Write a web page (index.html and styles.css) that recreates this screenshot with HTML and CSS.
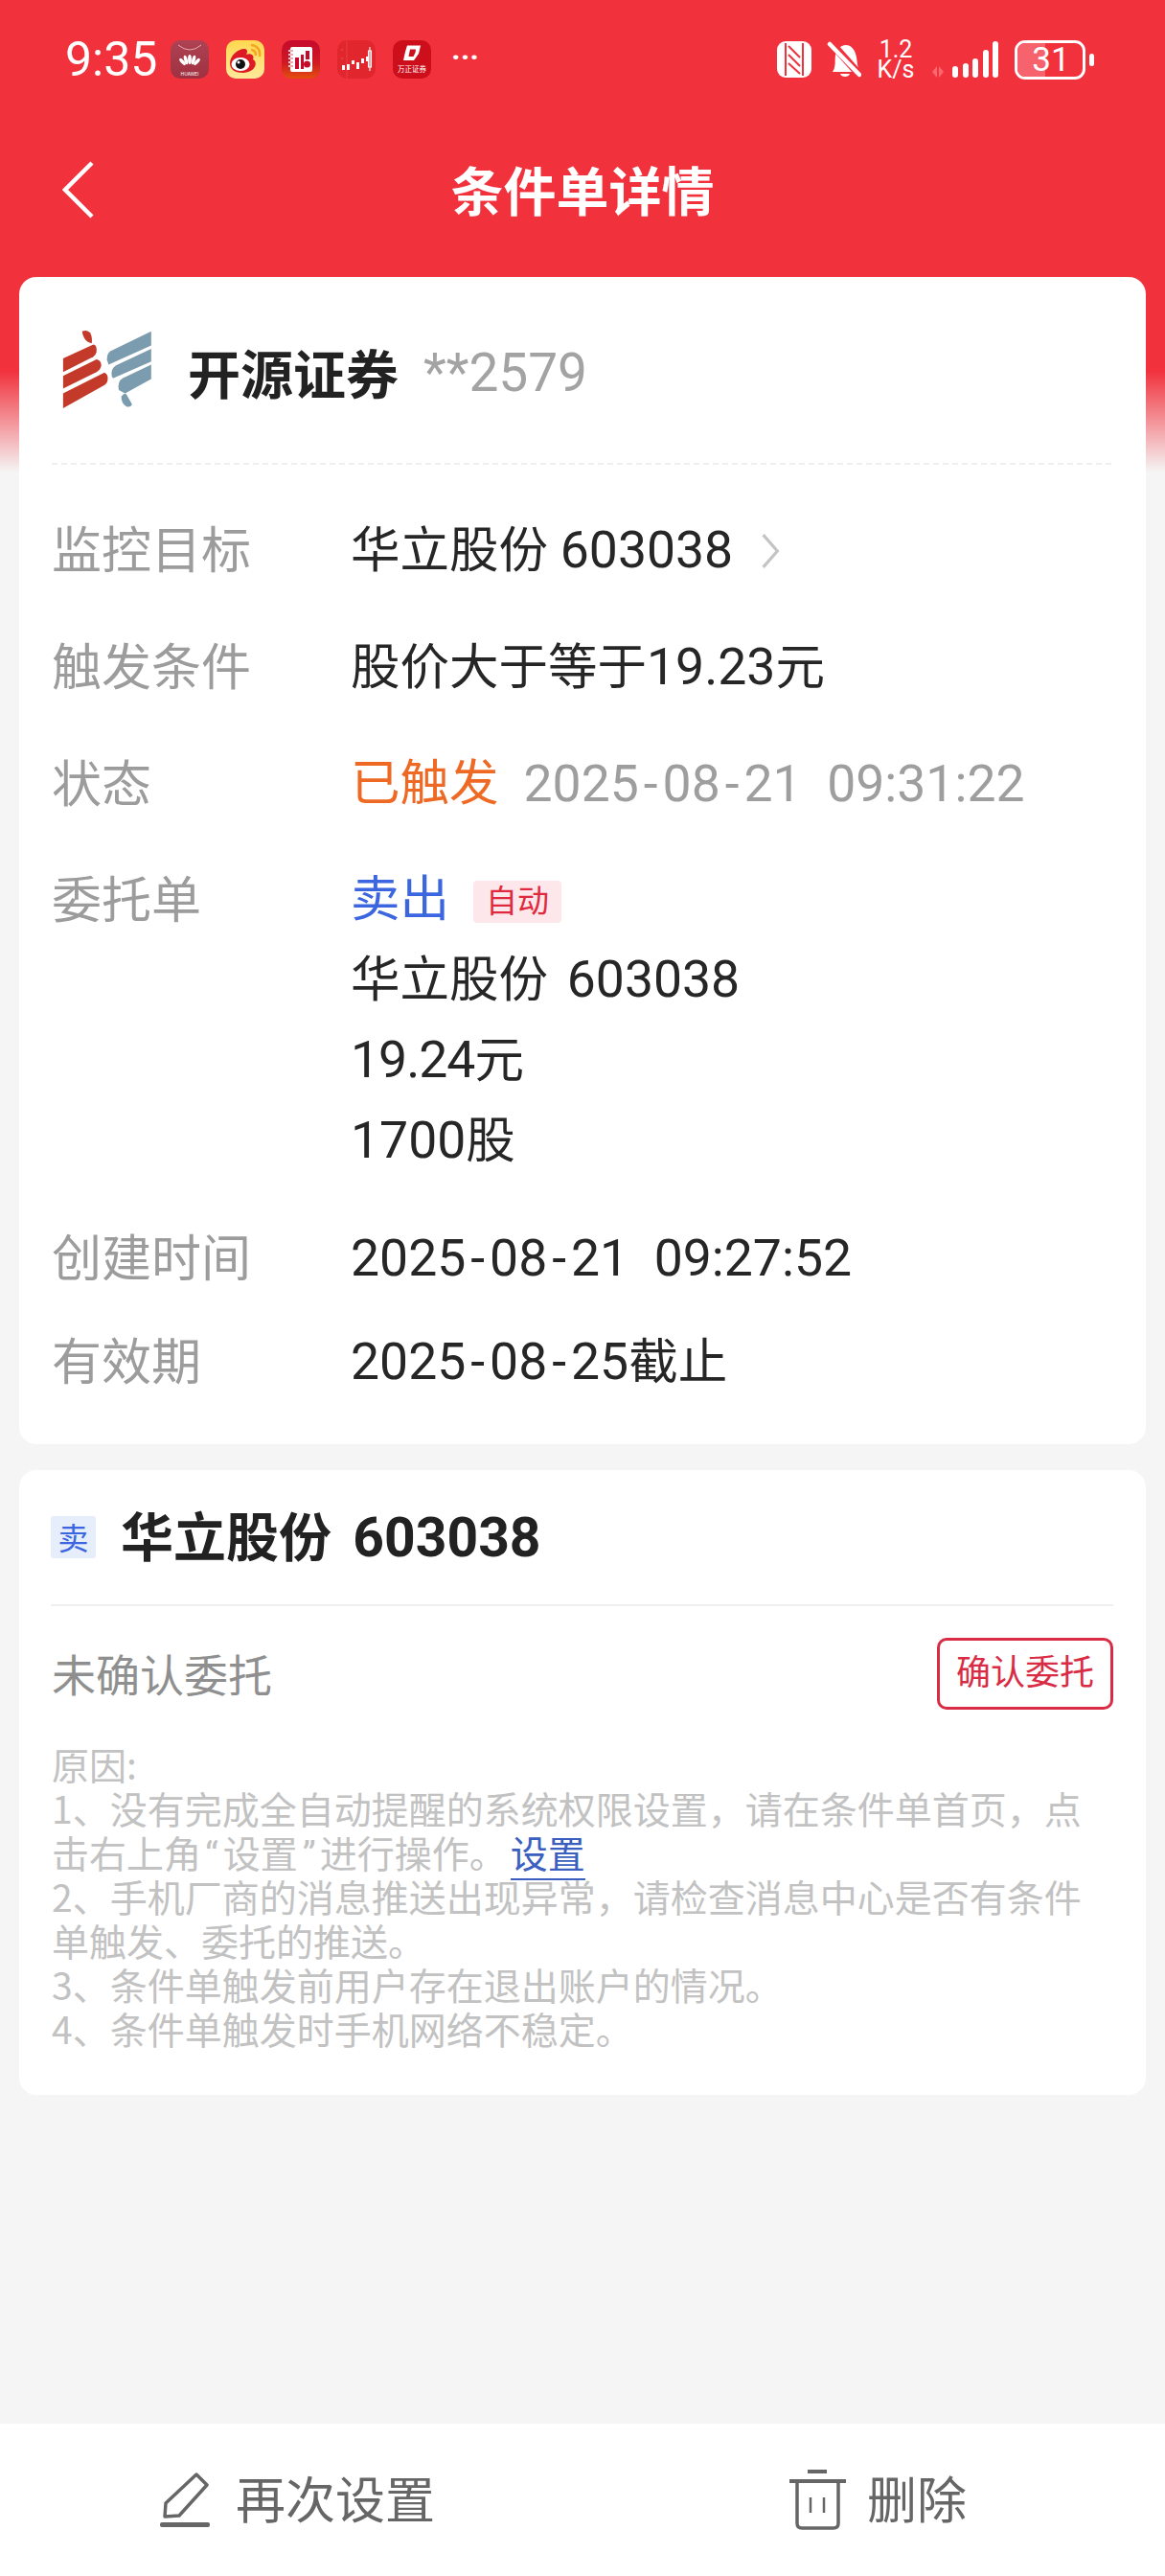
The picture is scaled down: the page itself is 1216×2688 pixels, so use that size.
FILE: index.html
```html
<!DOCTYPE html>
<html lang="zh-CN">
<head>
<meta charset="utf-8">
<title>条件单详情</title>
<link rel="stylesheet" href="styles.css">
</head>
<body>
<div class="screen">
  <header class="status">
    <span class="time">9:35</span>
    <div class="apps">
      <svg class="app" viewBox="0 0 40 40"><defs><linearGradient id="hw" x1="0" y1="0" x2="0" y2="1"><stop offset="0" stop-color="#ad4354"/><stop offset="1" stop-color="#a0303f"/></linearGradient></defs><rect width="40" height="40" rx="10" fill="url(#hw)"/><path d="M8 5Q20 15 32 5" fill="none" stroke="#e8b4bb" stroke-width=".9"/><g fill="#fff"><ellipse cx="20" cy="20" rx="1.900" ry="5"/><ellipse cx="16" cy="20.500" rx="1.800" ry="5" transform="rotate(-16 16 20.500)"/><ellipse cx="24" cy="20.500" rx="1.800" ry="5" transform="rotate(16 24 20.500)"/><ellipse cx="12.500" cy="22.500" rx="1.700" ry="4.500" transform="rotate(-42 12.500 22.500)"/><ellipse cx="27.500" cy="22.500" rx="1.700" ry="4.500" transform="rotate(42 27.500 22.500)"/></g><text x="20" y="36.500" class="app-txt" font-size="5">HUAWEI</text></svg>
      <svg class="app" viewBox="0 0 40 40"><defs><linearGradient id="wb" x1="0" y1="0" x2="0" y2="1"><stop offset="0" stop-color="#ffd84f"/><stop offset="1" stop-color="#ffe99a"/></linearGradient></defs><rect width="40" height="40" rx="10" fill="url(#wb)"/><path d="M4 24C4 15 14 8 20 9C23 10 22 13 21 15C26 13 30 16 28 20C33 22 32 33 18 34C10 34 4 31 4 24Z" fill="#dc1b24"/><ellipse cx="15" cy="25" rx="9.5" ry="7" fill="#fff"/><circle cx="15" cy="25" r="5" fill="#111"/><circle cx="13" cy="23" r="1.5" fill="#fff"/><path d="M26 5C32 5 36 10 35 17M26 10C29 10 31 12 31 16" fill="none" stroke="#f5a623" stroke-width="2.6"/></svg>
      <svg class="app" viewBox="0 0 40 40"><defs><linearGradient id="nb" x1="0" y1="0" x2="0" y2="1"><stop offset="0" stop-color="#c50a2c"/><stop offset=".6" stop-color="#d01a24"/><stop offset="1" stop-color="#e3500c"/></linearGradient></defs><rect width="40" height="40" rx="10" fill="url(#nb)"/><rect x="9" y="7" width="23" height="26" rx="2" fill="#fff"/><path d="M7 11h5M7 15h5M7 19h5M7 23h5M7 27h5" stroke="#fff" stroke-width="1.6"/><path d="M9 11h3M9 15h3M9 19h3M9 23h3M9 27h3" stroke="#c50a2c" stroke-width=".7"/><rect x="14" y="18" width="4" height="12" fill="#c50a2c"/><rect x="25" y="11" width="4" height="9" fill="#c50a2c"/><rect x="20" y="15" width="3" height="15" fill="#c50a2c"/><circle cx="26.500" cy="25" r="3.500" fill="#c50a2c"/></svg>
      <svg class="app" viewBox="0 0 40 40"><rect width="40" height="40" rx="10" fill="#e2262d"/><path d="M10 0V40" stroke="#ea4a4f" stroke-width=".7"/><path d="M4 10h2M4 19h2" stroke="#ee6a6e" stroke-width=".7"/><g fill="#fff"><path d="M5 26h3v5h-3zM10 25h3v6h-3zM15 21h3v4h-3zM20 23h3v7h-3zM25 19h3v5h-3zM30 17h3v5h-3z"/></g><path d="M32.500 11h3v17h-3zM34 7v25" fill="none" stroke="#fff" stroke-width="1.100"/></svg>
      <svg class="app" viewBox="0 0 40 40"><rect width="40" height="40" rx="10" fill="#cd0f1c"/><path d="M15 5.500H29L27 14 22 21H11L13 12ZM18 9.500 16.500 17H21.500L23.500 13 24 9.500Z" fill="#fff" fill-rule="evenodd"/><text x="20" y="33" class="app-txt" font-size="7.500">万正证券</text></svg>
      <span class="more">···</span>
    </div>
    <div class="sys">
      <svg class="nfc" viewBox="0 0 36 38"><rect width="36" height="38" rx="9" fill="#fff"/><path d="M9 2V36M27 2V36" stroke="#f1323d" stroke-width="2"/><path d="M12 5 24 17M12 14 24 26M12 23 24 34" stroke="#f1323d" stroke-width="2" fill="none"/></svg>
      <svg class="bell" viewBox="0 0 36 38"><path d="M6 32C10 26 8 20 9 15 10 9 14 4 20 4S30 10 31 17C32 23 32 27 34 32Z" fill="#fff"/><path d="M14 34H24C23 38 15 38 14 34Z" fill="#fff"/><path d="M4 1 35 36" stroke="#f1323d" stroke-width="8"/><path d="M3 3 34 35" stroke="#fff" stroke-width="4.500" stroke-linecap="round"/></svg>
      <div class="speed"><span>1.2</span><span>K/s</span></div>
      <svg class="signal" viewBox="0 0 70 38"><path d="M0 32 5 26V38ZM7 38V26L12 32Z" fill="#f8696f"/><g fill="#fff"><rect x="21" y="26" width="6" height="12" rx="3"/><rect x="32" y="23" width="6" height="15" rx="3"/><rect x="42" y="18" width="6" height="20" rx="3"/><rect x="53" y="9" width="6" height="29" rx="3"/><rect x="63" y="0" width="6" height="38" rx="3"/></g></svg>
      <div class="battery"><div class="cell"><i class="fill"></i><span>31</span></div><i class="nub"></i></div>
    </div>
  </header>

  <nav class="nav">
    <svg class="back" viewBox="0 0 34 60"><path d="M31 2 3 30 31 58" fill="none" stroke="#fff" stroke-width="4.500"/></svg>
    <h1 class="title">条件单详情</h1>
  </nav>

  <main class="main">
    <section class="card">
      <div class="broker">
        <svg class="logo" viewBox="70 45 285 250"><g fill="#c43a2a"><path d="M135 50Q150 45 160 55 168 70 165 88 150 85 142 72 135 60 135 50Z"/><path d="M75 135 170 92Q182 92 180 115 178 125 170 130L75 178Z"/><path d="M75 190 180 138Q195 140 195 158 192 172 180 178L75 230Z"/><path d="M75 245 205 180Q218 185 215 205 212 218 200 222L75 292Z"/></g><g fill="#7b9bae"><path d="M352 50 225 112Q212 120 213 140L218 155 352 95Z"/><path d="M352 105 240 158Q225 168 228 190L232 198 352 145Z"/><path d="M352 155 262 198Q245 208 250 235L270 245 352 200Z"/><path d="M258 255Q270 240 275 250L292 280Q285 292 272 285 258 275 258 255Z"/></g></svg>
        <span class="broker-name">开源证券</span>
        <span class="broker-acct">**2579</span>
      </div>
      <div class="rows">
        <div class="row">
          <span class="label">监控目标</span>
          <div class="value"><span>华立股份 <span class="num">603038</span></span><svg class="chev" viewBox="0 0 20 36"><path d="M3 2 17 18 3 34" fill="none" stroke="#c4c4c4" stroke-width="3"/></svg></div>
        </div>
        <div class="row"><span class="label">触发条件</span><div class="value"><span>股价大于等于<span class="num">19.23</span>元</span></div></div>
        <div class="row"><span class="label">状态</span><div class="value"><span class="fired">已触发</span><span class="fired-time num">2025<b class="h">-</b>08<b class="h">-</b>21&nbsp;&nbsp;09:31:22</span></div></div>
        <div class="row row-order">
          <span class="label">委托单</span>
          <div class="stack">
            <div class="value"><span class="sell">卖出</span><span class="auto">自动</span></div>
            <div class="value"><span>华立股份&nbsp;<span class="num code-gap">603038</span></span></div>
            <div class="value"><span><span class="num num-tight">19.24</span>元</span></div>
            <div class="value"><span><span class="num">1700</span>股</span></div>
          </div>
        </div>
        <div class="row row-created"><span class="label">创建时间</span><div class="value"><span class="num">2025<b class="h">-</b>08<b class="h">-</b>21&nbsp;&nbsp;09:27:52</span></div></div>
        <div class="row row-expire"><span class="label">有效期</span><div class="value"><span><span class="num">2025<b class="h">-</b>08<b class="h">-</b>25</span>截止</span></div></div>
      </div>
    </section>

    <section class="card">
      <div class="stock">
        <span class="tag">卖</span>
        <span class="stock-name">华立股份&nbsp;&nbsp;<span class="stock-code">603038</span></span>
      </div>
      <div class="confirm">
        <span class="confirm-text">未确认委托</span>
        <span class="confirm-btn">确认委托</span>
      </div>
      <div class="reasons">
        <p>原因:</p>
        <p>1、没有完成全自动提醒的系统权限设置&#65292;请在条件单首页&#65292;点<br>击右上角<span class="ql">“</span>设置<span class="qr">”</span>进行操作。<a class="reason-link">设置</a></p>
        <p>2、手机厂商的消息推送出现异常&#65292;请检查消息中心是否有条件<br>单触发、委托的推送。</p>
        <p>3、条件单触发前用户存在退出账户的情况。</p>
        <p>4、条件单触发时手机网络不稳定。</p>
      </div>
    </section>
  </main>

  <footer class="bottom">
    <div class="action">
      <svg class="ic-edit" viewBox="0 0 52 57"><path d="M38 2 49 13 20 45 5 46 6 32Z" fill="none" stroke="#666" stroke-width="3.500" stroke-linejoin="round"/><rect y="52" width="52" height="5" rx="2" fill="#666"/></svg>
      <span class="action-text">再次设置</span>
    </div>
    <div class="action">
      <svg class="ic-del" viewBox="0 0 59 63"><path d="M19 2H39M0 12H59" stroke="#666" stroke-width="4"/><path d="M8 12V56Q8 61 13 61H46Q51 61 51 56V12" fill="none" stroke="#666" stroke-width="3.500"/><path d="M22 29V45M36 29V45" stroke="#666" stroke-width="2.500"/></svg>
      <span class="action-text">删除</span>
    </div>
  </footer>
</div>
</body>
</html>
```
FILE: styles.css
```css
* { box-sizing: border-box; }
html, body { margin: 0; padding: 0; }
body {
  width: 1216px;
  height: 2688px;
  font-family: Roboto, "Noto Sans CJK SC", sans-serif;
  background: linear-gradient(to bottom, #f1323d 0, #f1323d 387px, #f5f5f5 493px, #f5f5f5 100%);
  color: #222;
}
.screen { height: 2688px; display: flex; flex-direction: column; overflow: hidden; }

/* status bar */
.status { height: 124px; flex: none; display: flex; align-items: center; padding: 0 74px 0 68px; color: #fff; }
.time { font-size: 50px; width: 110px; line-height: 1; }
.apps { display: flex; align-items: center; gap: 18px; }
.app { width: 40px; height: 40px; display: block; }
.app-txt { fill: #fff; text-anchor: middle; font-family: "Noto Sans CJK SC", sans-serif; }
.more { font-size: 32px; line-height: 1; margin: -6px 0 0 3px; font-weight: 700; }
.sys { margin-left: auto; display: flex; align-items: center; }
.nfc { width: 36px; height: 38px; display: block; }
.bell { width: 36px; height: 38px; display: block; margin-left: 16px; }
.speed { display: flex; flex-direction: column; align-items: center; font-size: 25px; line-height: 21px; margin-left: 16px; width: 40px; }
.signal { width: 70px; height: 38px; display: block; margin-left: 18px; }
.battery { display: flex; align-items: center; margin-left: 16px; }
.cell { position: relative; width: 74px; height: 41px; border: 3px solid #fff; border-radius: 11px; overflow: hidden; display: flex; align-items: center; justify-content: center; }
.fill { position: absolute; left: 0; top: 0; bottom: 0; width: 29px; background: #f6636c; }
.cell span { position: relative; font-size: 35px; line-height: 1; padding-left: 2px; }
.nub { width: 5px; height: 13px; background: #fff; border-radius: 3px; margin-left: 4px; }

/* nav */
.nav { height: 150px; flex: none; position: relative; display: flex; align-items: center; justify-content: center; padding-bottom: 5px; }
.back { position: absolute; left: 65px; top: 44px; width: 34px; height: 60px; }
.title { margin: 0; color: #fff; font-family: "Noto Sans CJK SC", sans-serif; font-size: 55px; line-height: 1; font-weight: 700; }

/* cards */
.main { flex: 1; padding: 15px 20px 0; display: flex; flex-direction: column; gap: 27px; }
.card { background: #fff; border-radius: 18px; }

.broker { height: 196px; margin: 0 36px 0 34px; padding-left: 10px; border-bottom: 2px dashed #efefef; display: flex; align-items: center; }
.logo { width: 95px; height: 83px; flex: none; margin-top: -2px; }
.broker-name { font-family: "Noto Sans CJK SC", sans-serif; font-size: 55px; font-weight: 700; margin-left: 37px; color: #222; line-height: 1; margin-top: 2px; }
.broker-acct { font-size: 55px; color: #a3a3a3; margin-left: 26px; line-height: 1; margin-top: 6px; }

.rows { padding: 57px 34px 57px; display: flex; flex-direction: column; gap: 61px; }
.row { display: grid; grid-template-columns: 312px 1fr; align-items: start; }
.row-created { margin-top: 1px; }
.row-expire { margin-top: -13px; }
.label { font-size: 52px; line-height: 60px; color: #9c9c9c; font-family: "Noto Sans CJK SC", sans-serif; margin-top: -1px; }
.value { font-size: 51.5px; line-height: 60px; color: #262626; display: flex; align-items: center; white-space: pre; position: relative; top: 2px; }
.num { font-size: 53.5px; }
.num-tight { letter-spacing: -1px; }
.code-gap { margin-left: 7px; }
.h { font-weight: inherit; margin: 0 5px; }
.chev { width: 22px; height: 38px; margin-left: 28px; }
.fired { color: #ee6a24; }
.fired-time { color: #9e9e9e; margin-left: 26px; }
.stack { display: flex; flex-direction: column; gap: 23px; }
.sell { color: #3b66e0; }
.auto { margin-left: 25px; margin-top: 3px; width: 92px; height: 44px; background: #fde7ea; border-radius: 4px; color: #e0293f; font-size: 33px; line-height: 44px; text-align: center; }

/* second card */
.stock { height: 142px; margin: 0 34px 0 33px; border-bottom: 2px solid #efefef; display: flex; align-items: center; }
.tag { width: 47px; height: 44px; background: #e6eefc; border-radius: 3px; color: #3b66e0; font-size: 32px; line-height: 42px; text-align: center; font-family: "Noto Sans CJK SC", sans-serif; }
.stock-name { font-size: 55px; font-weight: 700; margin-left: 26px; color: #222; line-height: 1; }
.stock-code { font-size: 57px; margin-left: -5px; }
.confirm { margin: 33px 34px 33px 34px; display: flex; align-items: center; justify-content: space-between; }
.confirm-text { font-size: 46px; color: #8f8f8f; font-family: "Noto Sans CJK SC", sans-serif; margin-top: -4px; }
.confirm-btn { width: 184px; height: 75px; border: 3px solid #d92c44; border-radius: 10px; color: #d92c44; font-size: 36px; line-height: 69px; text-align: center; }
.reasons { padding: 0 33px 47px 34px; font-size: 39px; line-height: 46px; color: #c2c2c2; font-family: "Noto Sans CJK SC", sans-serif; }
.reasons p { margin: 0; }
.ql, .qr { font-family: Roboto, sans-serif; line-height: 0; }
.ql { margin-left: 4px; margin-right: 5px; }
.qr { margin-left: 5px; margin-right: 4px; }
.reason-link { color: #3a5fc0; border-bottom: 2px solid #3a5fc0; margin-left: 4px; }

/* bottom */
.bottom { height: 159px; flex: none; background: #fff; display: flex; }
.action { flex: 1; padding-left: 9px; display: flex; align-items: center; justify-content: center; color: #666; font-size: 52px; font-family: "Noto Sans CJK SC", sans-serif; }
.action-text { margin-top: -7px; }
.ic-edit { width: 52px; height: 57px; margin-right: 27px; margin-left: 4px; flex: none; }
.ic-del { width: 59px; height: 63px; margin-right: 22px; flex: none; }
```
